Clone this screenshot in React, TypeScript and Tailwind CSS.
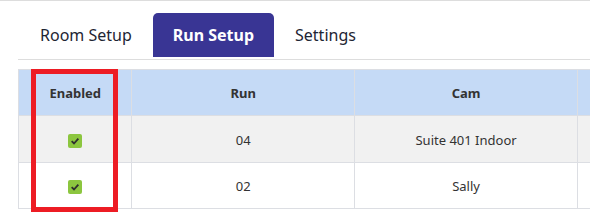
import React from "react";

type Row = {
  enabled: boolean;
  run: string;
  cam: string;
};

const rows: Row[] = [
  { enabled: true, run: "04", cam: "Suite 401 Indoor" },
  { enabled: true, run: "02", cam: "Sally" },
];

const tabs = ["Room Setup", "Run Setup", "Settings"];

function CheckMark() {
  return (
    <span className="inline-flex h-[14px] w-[14px] items-center justify-center rounded-[2px] bg-[#8cc63f] align-middle">
      <svg viewBox="0 0 12 12" className="h-[10px] w-[10px]">
        <path d="M2 6.2 L4.8 9 L10 3.2" fill="none" stroke="#2f2f2f" strokeWidth="2.2" />
      </svg>
    </span>
  );
}

export default function App() {
  return (
    <div
      className="relative h-[214px] w-[590px] overflow-hidden border-t border-[#dddddd] bg-white"
      style={{ fontFamily: '"Noto Sans", "Open Sans", sans-serif' }}
    >
      <div className="ml-[18px] flex border-b border-[#dddddd] pb-[2px] pl-[1px] pt-[12px]">
        {tabs.map((tab) => {
          const active = tab === "Run Setup";
          return (
            <div
              key={tab}
              className={
                active
                  ? "flex h-[44px] items-center rounded-t-[5px] bg-[#393594] px-[20px] text-[16px] font-bold text-white"
                  : "flex h-[44px] items-center px-[21px] text-[16px] text-[#1e2533]"
              }
            >
              {tab}
            </div>
          );
        })}
      </div>

      <div className="ml-[18px] mt-[9px] w-[600px]">
        <table className="border-collapse text-[13px] text-[#333333]">
          <thead>
            <tr className="h-[46px] bg-[#c5daf6]">
              <th className="w-[114px] border border-[#dcdee3] pt-[2px] font-bold">Enabled</th>
              <th className="w-[224px] border border-[#dcdee3] pt-[2px] font-bold">Run</th>
              <th className="w-[225px] border border-[#dcdee3] pt-[2px] font-bold">Cam</th>
              <th className="w-[40px] border border-[#dcdee3]"></th>
            </tr>
          </thead>
          <tbody>
            {rows.map((row, i) => (
              <tr key={row.run} className={i % 2 === 0 ? "h-[47px] bg-[#f1f1f1]" : "h-[46px] bg-white"}>
                <td className="border border-[#dcdee3] pt-[2px] text-center align-middle">
                  {row.enabled ? <CheckMark /> : null}
                </td>
                <td className="border border-[#dcdee3] pt-[3px] text-center">{row.run}</td>
                <td className="border border-[#dcdee3] pt-[3px] text-center">{row.cam}</td>
                <td className="border border-[#dcdee3]"></td>
              </tr>
            ))}
          </tbody>
        </table>
      </div>

      <div className="absolute left-[31px] top-[68px] h-[143px] w-[87px] border-[5px] border-[#ed1c24]" />
    </div>
  );
}
